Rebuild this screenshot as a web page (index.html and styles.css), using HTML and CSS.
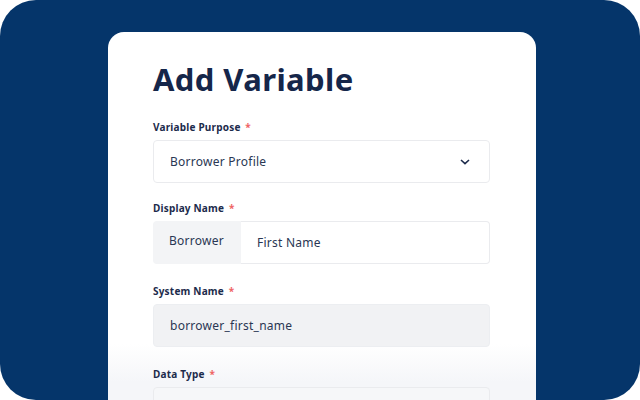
FILE: index.html
```html
<!DOCTYPE html>
<html lang="en">

<head>
    <meta charset="UTF-8" />
    <meta name="viewport" content="width=device-width, initial-scale=1.0" />
    <title>Add Variable</title>
    <link rel="stylesheet" href="styles.css">
</head>

<body>
    <div class="panel">
        <div class="card">
            <h1>Add Variable</h1>

            <div class="field purpose">
                <label>Variable Purpose <span class="req">*</span></label>
                <div class="box select">
                    <span>Borrower Profile</span>
                    <svg width="10" height="6" viewBox="0 0 10 6">
                        <path d="M1 1l4 3.6L9 1" fill="none" stroke="#1c2b4b" stroke-width="1.6" />
                    </svg>
                </div>
            </div>

            <div class="field">
                <label>Display Name <span class="req">*</span></label>
                <div class="group">
                    <div class="prefix">Borrower</div>
                    <div class="box input">First Name</div>
                </div>
            </div>

            <div class="field">
                <label>System Name <span class="req">*</span></label>
                <div class="box disabled">borrower_first_name</div>
            </div>

            <div class="field">
                <label>Data Type <span class="req">*</span></label>
                <div class="box faded"></div>
            </div>
        </div>
    </div>
</body>

</html>
```

FILE: styles.css
```css
html,
body {
    margin: 0;
    height: 100%;
    background: #fff;
}

body {
    font-family: "Noto Sans", "Open Sans", Arial, sans-serif;
    color: #1c2b4b;
    overflow: hidden;
}

.panel {
    height: 400px;
    background-color: #05356a;
    border-radius: 36px;
    padding-top: 32px;
    box-sizing: border-box;
    overflow: hidden;
}

.card {
    width: 428px;
    height: 368px;
    margin-left: 108px;
    box-sizing: border-box;
    padding: 28px 46px 0 45px;
    border-radius: 16px 16px 0 0;
    background: linear-gradient(to bottom, #fff 0, #fff 312px, #f5f6f9 350px);
    overflow: hidden;
}

h1 {
    margin: 0 0 22px;
    font-size: 31px;
    line-height: 38px;
    font-weight: 700;
    letter-spacing: 0.4px;
    color: #15264a;
}

.field {
    margin-bottom: 20px;
}

.field.purpose {
    margin-bottom: 18px;
}

label {
    display: block;
    font-size: 10px;
    font-weight: 700;
    line-height: 14px;
    letter-spacing: 0.2px;
    margin-bottom: 6px;
}

.req {
    color: #ef6464;
    margin-left: 2px;
}

.box {
    height: 43px;
    box-sizing: border-box;
    border: 1px solid #eaebee;
    border-radius: 4px;
    padding: 0 16px;
    display: flex;
    align-items: center;
    font-size: 12px;
    letter-spacing: 0.25px;
    color: #2a3753;
}

.select {
    justify-content: space-between;
    padding-right: 19px;
}

.group {
    display: flex;
}

.prefix {
    width: 88px;
    height: 43px;
    box-sizing: border-box;
    padding: 0 16px 4px;
    display: flex;
    align-items: center;
    background-color: #f3f4f6;
    border-radius: 4px 0 0 4px;
    font-size: 12px;
    letter-spacing: 0.25px;
    color: #2a3753;
}

.input {
    flex: 1;
    border-left: none;
    border-radius: 0 4px 4px 0;
}

.disabled {
    background-color: #f1f2f4;
    border-color: #eceef1;
}

.faded {
    background-color: #f6f7f9;
}
```
